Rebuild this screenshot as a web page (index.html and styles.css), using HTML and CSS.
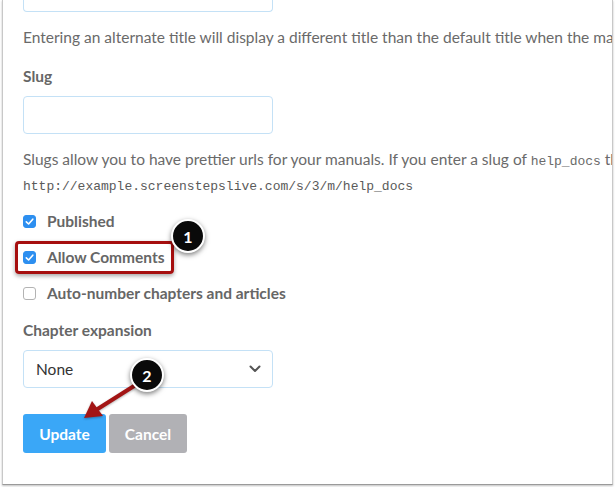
FILE: index.html
```html
<!DOCTYPE html>
<html>
<head>
<meta charset="utf-8">
<link rel="stylesheet" href="styles.css">
</head>
<body>
<div class="frame">
  <div class="content">
    <div class="field field-cut"></div>
    <p class="help first">Entering an alternate title will display a different title than the default title when the manual is viewed.</p>
    <label class="label">Slug</label>
    <div class="field"></div>
    <p class="help">Slugs allow you to have prettier urls for your manuals. If you enter a slug of <code>help_docs</code> then the url will be</p>
    <p class="mono">http://example.screenstepslive.com/s/3/m/help_docs</p>
    <div class="checks">
      <div class="check"><span class="box on"><svg viewBox="0 0 13 13" width="13" height="13"><path d="M3.3 6.8 L5.6 9 L9.8 4.2" fill="none" stroke="#fff" stroke-width="1.6" stroke-linecap="round" stroke-linejoin="round"/></svg></span>Published</div>
      <div class="check"><span class="box on"><svg viewBox="0 0 13 13" width="13" height="13"><path d="M3.3 6.8 L5.6 9 L9.8 4.2" fill="none" stroke="#fff" stroke-width="1.6" stroke-linecap="round" stroke-linejoin="round"/></svg></span>Allow Comments</div>
      <div class="check"><span class="box"></span>Auto-number chapters and articles</div>
    </div>
    <label class="label">Chapter expansion</label>
    <div class="field select"><span>None</span><svg width="12" height="8" viewBox="0 0 12 8"><path d="M1.5 1.5 L6 6 L10.5 1.5" fill="none" stroke="#555" stroke-width="2" stroke-linecap="round" stroke-linejoin="round"/></svg></div>
    <div class="buttons">
      <button class="btn primary">Update</button>
      <button class="btn secondary">Cancel</button>
    </div>
  </div>
</div>
<div class="highlight"></div>
<div class="callout c1">1</div>
<svg class="arrow" width="615" height="487" viewBox="0 0 615 487">
  <line x1="134" y1="386" x2="96" y2="410" stroke="#a31515" stroke-width="4" stroke-linecap="round"/>
  <polygon points="84,418 92,401 103,416" fill="#a31515"/>
</svg>
<div class="callout c2">2</div>
</body>
</html>
```
FILE: styles.css
```css
* { box-sizing: border-box; }
html, body { margin: 0; padding: 0; }
body {
  position: relative;
  width: 615px;
  height: 487px;
  overflow: hidden;
  background: #fff;
  font-family: "Lato", "Open Sans", sans-serif;
  color: #666;
}
.frame {
  margin: 0 2px;
  height: 485px;
  border-left: 1px solid #c8c8c8;
  border-right: 1px solid #c8c8c8;
  border-bottom: 1px solid #9a9a9a;
  box-shadow: 0 1px 2px rgba(0,0,0,0.25);
  background: #fff;
  overflow: hidden;
}
.content {
  padding-left: 20px;
  white-space: nowrap;
}
.field {
  width: 250px;
  height: 38px;
  border: 1px solid #c4e1f6;
  border-radius: 4px;
  background: #fff;
}
.field-cut {
  height: 12px;
  border-top: none;
  border-radius: 0 0 4px 4px;
}
.help {
  margin: 15px 0 0;
  font-size: 15.5px;
  line-height: 20px;
  color: #6a6a6a;
}
.help.first { margin-top: 15px; }
.help code, .mono {
  font-family: "Liberation Mono", monospace;
  font-size: 13px;
}
.mono {
  margin: 5px 0 0;
  line-height: 20px;
  color: #5a5a5a;
}
.label {
  display: block;
  margin: 19px 0 10px;
  font-size: 15.5px;
  font-weight: bold;
  line-height: 20px;
  color: #666;
}
.checks {
  margin-top: 14px;
  display: flex;
  flex-direction: column;
  gap: 16px;
}
.check {
  display: flex;
  align-items: center;
  gap: 11px;
  font-size: 15.5px;
  font-weight: bold;
  line-height: 20px;
  color: #666;
}
.box {
  width: 13px;
  height: 13px;
  border: 1px solid #b3b3b3;
  border-radius: 3px;
  background: #fff;
  display: flex;
}
.box.on {
  background: #2d8ff0;
  border-color: #2d8ff0;
}
.box.on svg { margin: -1px; }
.checks + .label { margin-top: 17px; }
.select {
  display: flex;
  align-items: center;
  justify-content: space-between;
  padding: 0 11px 0 12px;
  font-size: 15.5px;
  color: #333;
}
.buttons {
  margin-top: 26px;
  display: flex;
  gap: 3px;
}
.btn {
  height: 39px;
  border: none;
  border-radius: 3px;
  font-family: "Lato", sans-serif;
  font-size: 15.5px;
  font-weight: bold;
  color: #fff;
  padding: 0;
}
.primary { width: 83px; background: #3aa7f7; }
.secondary { width: 78px; background: #b1b1b5; }
.highlight {
  position: absolute;
  left: 15px;
  top: 241px;
  width: 159px;
  height: 33px;
  border: 3px solid #a60f0f;
  border-radius: 4px;
  box-shadow: 0 2px 4px rgba(0,0,0,0.35);
}
.callout {
  position: absolute;
  width: 34px;
  height: 34px;
  border-radius: 50%;
  background: #0a0a0a;
  border: 2px solid #fff;
  box-shadow: 0 2px 5px rgba(0,0,0,0.5);
  color: #fff;
  font-family: "Lato", sans-serif;
  font-weight: bold;
  font-size: 16px;
  display: flex;
  align-items: center;
  justify-content: center;
}
.c1 { left: 171px; top: 219px; }
.c2 { left: 130px; top: 358px; }
.arrow {
  position: absolute;
  left: 0;
  top: 0;
  filter: drop-shadow(0 1px 1px rgba(0,0,0,0.3));
}
```
